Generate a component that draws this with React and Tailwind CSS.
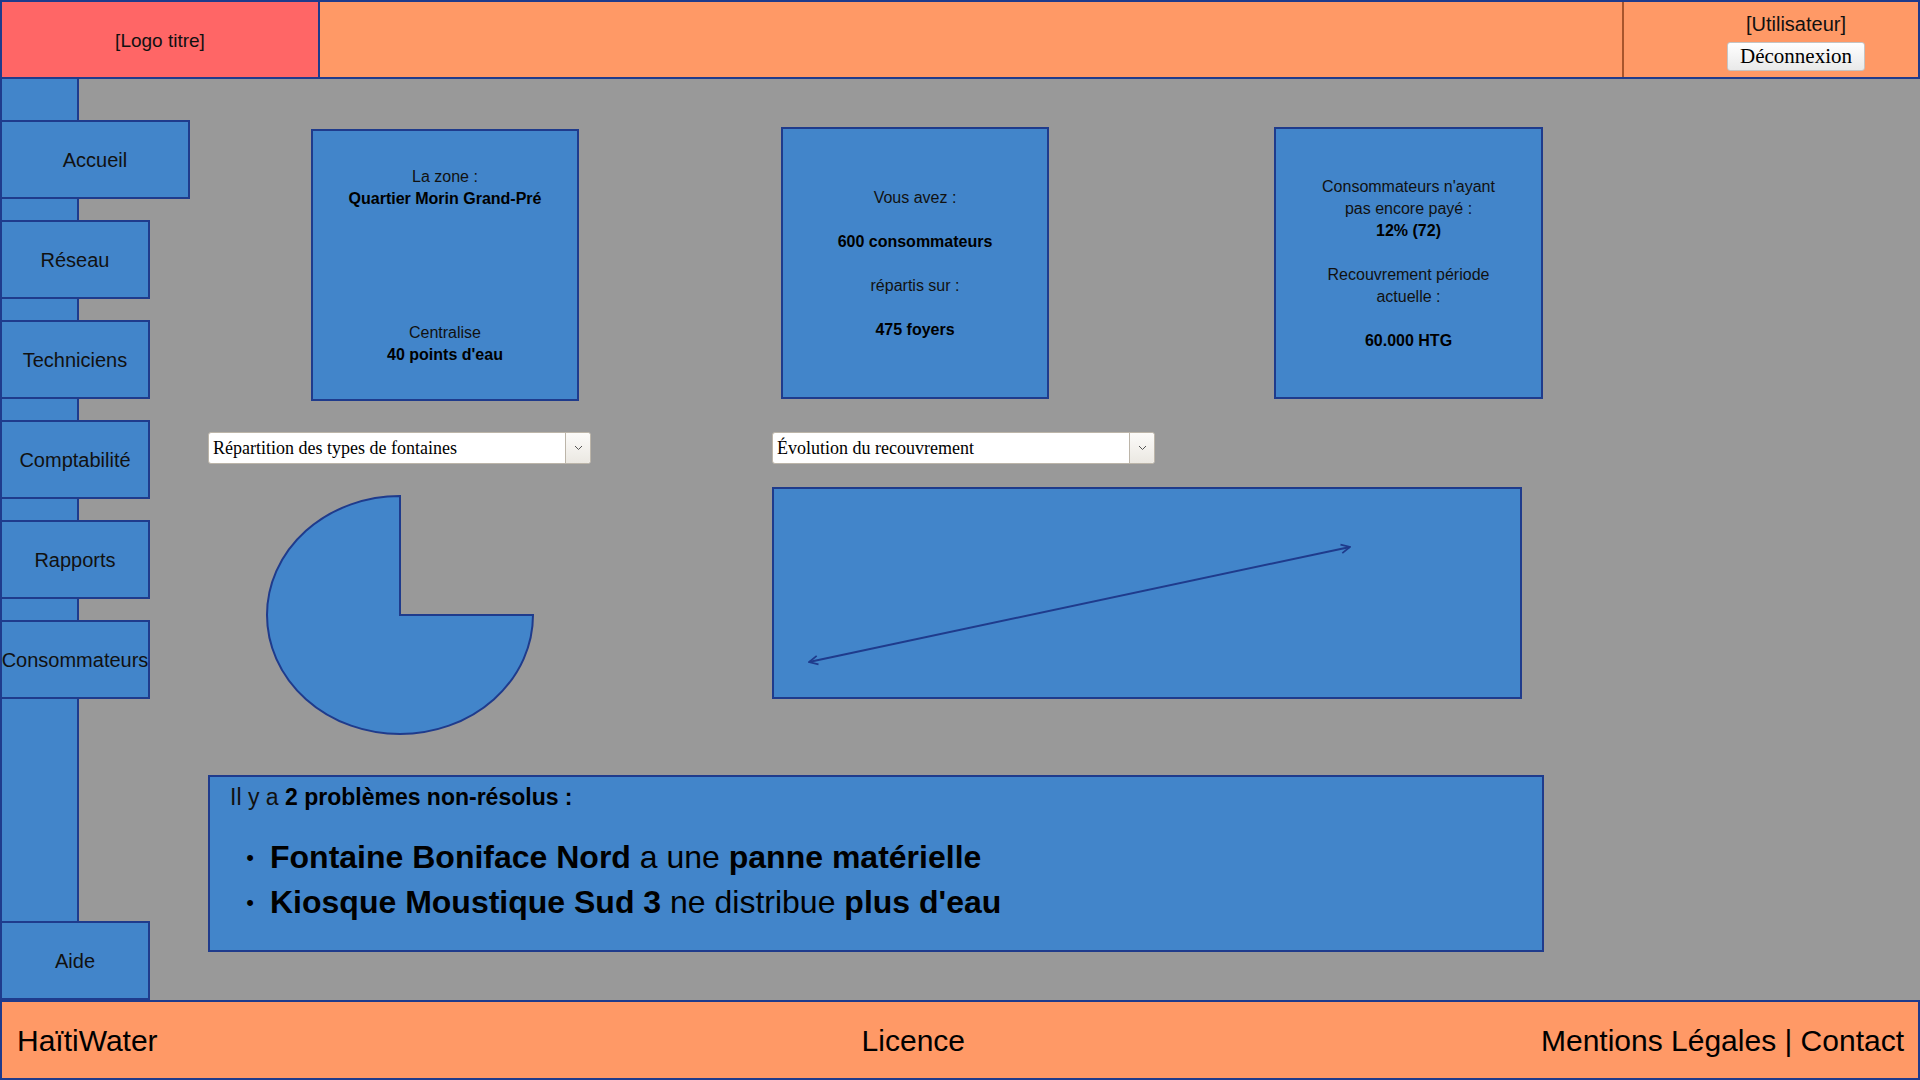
import React from 'react';

const navItems = ['Accueil', 'Réseau', 'Techniciens', 'Comptabilité', 'Rapports', 'Consommateurs'];

function NavButton({ label, wide }) {
  return (
    <div
      className={`${wide ? 'w-[190px]' : 'w-[150px]'} -ml-[2px] h-[79px] shrink-0 flex items-center justify-center bg-[#4285ca] border-2 border-[#1f3b8c] text-[20px] text-[#111] whitespace-nowrap`}
    >
      {label}
    </div>
  );
}

function FakeSelect({ label, className = '' }) {
  return (
    <div className={`w-[383px] h-[32px] flex bg-white border border-[#bcb5a9] rounded-[3px] ${className}`}>
      <div className="flex-1 flex items-center pl-[4px] font-['Liberation_Serif',serif] text-[18px] text-black whitespace-nowrap">
        {label}
      </div>
      <div className="w-[25px] border-l border-[#bcb5a9] bg-linear-to-b from-[#fcfbf9] to-[#ebe8e2] rounded-r-[3px] flex items-center justify-center">
        <svg width="9" height="6" viewBox="0 0 9 6">
          <path d="M1 1 L4.5 4.5 L8 1" fill="none" stroke="#555" strokeWidth="1" />
        </svg>
      </div>
    </div>
  );
}

export default function App() {
  return (
    <div className="w-[1920px] h-[1080px] flex flex-col font-['Liberation_Sans',Arial,sans-serif] text-[#111] overflow-hidden">
      {/* Header */}
      <header className="h-[79px] shrink-0 flex border-2 border-[#1f3b8c] bg-[#ff9966]">
        <div className="w-[318px] border-r-2 border-[#1f3b8c] bg-[#ff6666] flex items-center justify-center pt-[4px] text-[19px]">
          [Logo titre]
        </div>
        <div className="flex-1" />
        <div className="w-[296px] border-l-2 border-[#a8552c] flex flex-col items-center pl-[50px] pt-[10px]">
          <p className="text-[20px] leading-[24px]">[Utilisateur]</p>
          <button className="mt-[6px] h-[29px] px-[12px] border border-[#c4c4c4] rounded-[3px] bg-linear-to-b from-white to-[#e9e9e9] font-['Liberation_Serif',serif] text-[21px] leading-[27px] text-black">
            Déconnexion
          </button>
        </div>
      </header>

      {/* Middle */}
      <div className="flex-1 flex bg-[#999999]">
        <aside className="w-[79px] shrink-0 bg-[#4285ca] border-l-2 border-r-2 border-[#1f3b8c] flex flex-col pt-[41px] gap-[21px] relative z-10">
          {navItems.map((item, idx) => (
            <NavButton key={item} label={item} wide={idx === 0} />
          ))}
          <div className="mt-auto">
            <NavButton label="Aide" />
          </div>
        </aside>

        <main className="flex-1 pl-[129px] pt-[48px]">
          {/* Info cards */}
          <div className="flex items-start">
            <div className="ml-[103px] mt-[2px] w-[268px] h-[272px] bg-[#4285ca] border-2 border-[#1f3b8c] flex flex-col justify-between pt-[35px] pb-[33px] text-center text-[16px] leading-[22px]">
              <div>
                <p>La zone :</p>
                <p className="font-bold text-black">Quartier Morin Grand-Pré</p>
              </div>
              <div>
                <p>Centralise</p>
                <p className="font-bold text-black">40 points d'eau</p>
              </div>
            </div>

            <div className="ml-[202px] w-[268px] h-[272px] bg-[#4285ca] border-2 border-[#1f3b8c] flex flex-col justify-center pt-[2px] text-center text-[16px] leading-[22px]">
              <p>Vous avez :</p>
              <p>&nbsp;</p>
              <p className="font-bold text-black">600 consommateurs</p>
              <p>&nbsp;</p>
              <p>répartis sur :</p>
              <p>&nbsp;</p>
              <p className="font-bold text-black">475 foyers</p>
            </div>

            <div className="ml-[225px] w-[269px] h-[272px] bg-[#4285ca] border-2 border-[#1f3b8c] flex flex-col justify-center pt-[2px] text-center text-[16px] leading-[22px]">
              <p>Consommateurs n'ayant</p>
              <p>pas encore payé :</p>
              <p className="font-bold text-black">12% (72)</p>
              <p>&nbsp;</p>
              <p>Recouvrement période</p>
              <p>actuelle :</p>
              <p>&nbsp;</p>
              <p className="font-bold text-black">60.000 HTG</p>
            </div>
          </div>

          {/* Selectors */}
          <div className="flex mt-[31px]">
            <FakeSelect label="Répartition des types de fontaines" />
            <FakeSelect label="Évolution du recouvrement" className="ml-[181px]" />
          </div>

          {/* Charts */}
          <div className="flex items-start">
            <div className="w-[564px] shrink-0 pt-[31px] pl-[58px]">
              <svg width="268" height="240" viewBox="0 0 268 240">
                <path
                  d="M134 120 L134 1 A133 119 0 1 0 267 120 Z"
                  fill="#4285ca"
                  stroke="#1f3b8c"
                  strokeWidth="2"
                />
              </svg>
            </div>
            <div className="mt-[23px] w-[750px] h-[212px] bg-[#4285ca] border-2 border-[#1f3b8c]">
              <svg width="746" height="208" viewBox="0 0 746 208">
                <defs>
                  <marker
                    id="arrow"
                    viewBox="0 0 10 10"
                    refX="9"
                    refY="5"
                    markerWidth="11"
                    markerHeight="11"
                    markerUnits="userSpaceOnUse"
                    orient="auto-start-reverse"
                  >
                    <path d="M1 1 L9 5 L1 9" fill="none" stroke="#1f3b8c" strokeWidth="1.6" />
                  </marker>
                </defs>
                <line
                  x1="35"
                  y1="173"
                  x2="576"
                  y2="58"
                  stroke="#1f3b8c"
                  strokeWidth="2"
                  markerStart="url(#arrow)"
                  markerEnd="url(#arrow)"
                />
              </svg>
            </div>
          </div>

          {/* Problems */}
          <div className="mt-[40px] w-[1336px] h-[177px] bg-[#4285ca] border-2 border-[#1f3b8c]">
            <p className="pl-[20px] pt-[7px] text-[23px] leading-[26px]">
              Il y a <span className="font-bold text-black">2 problèmes non-résolus :</span>
            </p>
            <ul className="mt-[25px]">
              <li className="flex items-center pl-[30px] text-[32px] leading-[45px] text-black">
                <span className="w-[20px] mr-[10px] text-center text-[22px]">•</span>
                <span>
                  <b>Fontaine Boniface Nord</b> a une <b>panne matérielle</b>
                </span>
              </li>
              <li className="flex items-center pl-[30px] text-[32px] leading-[45px] text-black">
                <span className="w-[20px] mr-[10px] text-center text-[22px]">•</span>
                <span>
                  <b>Kiosque Moustique Sud 3</b> ne distribue <b>plus d'eau</b>
                </span>
              </li>
            </ul>
          </div>
        </main>
      </div>

      {/* Footer */}
      <footer className="h-[80px] shrink-0 flex items-center border-2 border-[#1f3b8c] bg-[#ff9966] pl-[15px] pr-[14px] text-[30px] text-black">
        <span>HaïtiWater</span>
        <span className="ml-[704px]">Licence</span>
        <span className="ml-auto">Mentions Légales | Contact</span>
      </footer>
    </div>
  );
}
